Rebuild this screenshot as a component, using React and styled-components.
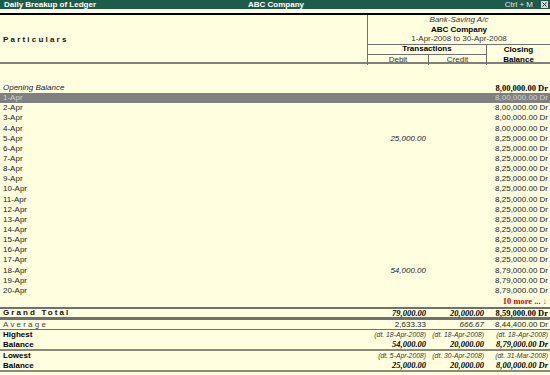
import styled, { createGlobalStyle } from "styled-components";

const GlobalStyle = createGlobalStyle`
  html, body {
    margin: 0;
    padding: 0;
    background: #ffffe0;
  }
  body {
    font-family: "Liberation Sans", Arial, sans-serif;
    font-size: 8px;
    color: #222;
  }
`;

const Window = styled.div`
  width: 550px;
  height: 375px;
  overflow: hidden;
  background: #ffffe0;
  display: flex;
  flex-direction: column;
`;

const TitleBar = styled.div`
  height: 9px;
  background: #1d5c4a;
  color: #fff;
  display: grid;
  grid-template-columns: 1fr auto 1fr;
  align-items: center;
  padding: 0 2px 0 4px;
  line-height: 9px;
  font-weight: bold;
`;

const TitleRight = styled.div`
  display: flex;
  justify-content: flex-end;
  align-items: center;
  gap: 8px;
  font-weight: normal;
  color: #e6e6e6;
`;

const CloseBox = styled.div`
  width: 7px;
  height: 7px;
  background: #d8d8d8;
  display: flex;
  align-items: center;
  justify-content: center;
`;

const TopRule = styled.div`
  margin-top: 4px;
  height: 2px;
  background: #000;
`;

const Header = styled.div`
  display: grid;
  grid-template-columns: 367px 1fr;
  height: 47px;
  border-bottom: 2px solid #808080;
`;

const Spaced = styled.div`
  letter-spacing: ${(p) => p.$ls || 2}px;
  color: ${(p) => p.$color || "#111"};
  font-weight: ${(p) => (p.$normal ? "normal" : "bold")};
`;

const HeadLeft = styled.div`
  display: flex;
  align-items: center;
  padding-left: 3px;
`;

const HeadRight = styled.div`
  border-left: 1px solid #707070;
  display: flex;
  flex-direction: column;
`;

const HeadLine = styled.div`
  height: 9.5px;
  line-height: 9.5px;
  text-align: center;
  font-style: ${(p) => (p.$italic ? "italic" : "normal")};
  font-weight: ${(p) => (p.$bold ? "bold" : "normal")};
  color: ${(p) => (p.$bold ? "#000" : "#333")};
`;

const ColGrid = styled.div`
  flex: 1;
  display: grid;
  grid-template-columns: 60px 58px 1fr;
  grid-template-rows: 10px 1fr;
  border-top: 1px solid #707070;
`;

const ColHead = styled.div`
  display: flex;
  flex-direction: column;
  align-items: center;
  justify-content: center;
  line-height: 10px;
  font-weight: ${(p) => (p.$bold ? "bold" : "normal")};
  color: ${(p) => (p.$bold ? "#000" : "#333")};
  grid-column: ${(p) => p.$col || "auto"};
  grid-row: ${(p) => p.$row || "auto"};
  border-left: ${(p) => (p.$left ? "1px solid #707070" : "none")};
  border-bottom: ${(p) => (p.$under ? "1px solid #707070" : "none")};
`;

const Body = styled.div`
  padding-top: 19px;
  height: 243px;
  box-sizing: border-box;
`;

const Row = styled.div`
  display: grid;
  grid-template-columns: 367px 61px 58px 64px;
  height: ${(p) => p.$h || 10.15}px;
  line-height: ${(p) => p.$h || 10.15}px;
  background: ${(p) => (p.$active ? "#808080" : "transparent")};
  color: ${(p) => (p.$active ? "#cfcfcf" : "#222")};
  border-top: ${(p) => p.$top || "none"};
  border-bottom: ${(p) => p.$bottom || "none"};
`;

const Label = styled.div`
  padding-left: 3px;
  white-space: nowrap;
  font-style: ${(p) => (p.$italic ? "italic" : "normal")};
  font-weight: ${(p) => (p.$bold ? "bold" : "normal")};
  color: ${(p) => (p.$bold ? "#000" : "inherit")};
`;

const Amt = styled.div`
  text-align: right;
  padding-right: 2px;
  white-space: nowrap;
  font-style: ${(p) => (p.$italic ? "italic" : "normal")};
  font-weight: ${(p) => (p.$bold ? "bold" : "normal")};
  font-family: ${(p) =>
    p.$bold ? '"Liberation Serif", "Times New Roman", serif' : "inherit"};
  font-size: ${(p) => (p.$small ? 6.8 : p.$bold ? 8.5 : 8)}px;
  color: ${(p) => (p.$bold ? "#000" : p.$small ? "#333" : "inherit")};
`;

const More = styled.div`
  grid-column: 4;
  text-align: right;
  padding-right: 3px;
  color: #e00000;
  font-weight: bold;
  font-family: "Liberation Serif", "Times New Roman", serif;
  font-size: 8.5px;
`;

const Group = styled.div`
  border-bottom: 2px solid #8a8a78;
  display: flex;
  flex-direction: column;
  justify-content: center;
`;

const days = Array.from({ length: 20 }, (_, i) => {
  const d = i + 1;
  let bal = "8,00,000.00 Dr";
  if (d >= 5) bal = "8,25,000.00 Dr";
  if (d >= 18) bal = "8,79,000.00 Dr";
  let debit = "";
  if (d === 5) debit = "25,000.00";
  if (d === 18) debit = "54,000.00";
  return { name: `${d}-Apr`, debit, bal };
});

const X = () => (
  <svg width="5" height="5" viewBox="0 0 5 5">
    <path d="M0.5 0.5L4.5 4.5M4.5 0.5L0.5 4.5" stroke="#333" strokeWidth="1" />
  </svg>
);

export default function App() {
  return (
    <Window>
      <GlobalStyle />
      <TitleBar>
        <div>Daily Breakup of Ledger</div>
        <div>ABC Company</div>
        <TitleRight>
          <span>Ctrl + M</span>
          <CloseBox>
            <X />
          </CloseBox>
        </TitleRight>
      </TitleBar>
      <TopRule />
      <Header>
        <HeadLeft>
          <Spaced $ls={2.2}>Particulars</Spaced>
        </HeadLeft>
        <HeadRight>
          <HeadLine $italic>Bank-Saving A/c</HeadLine>
          <HeadLine $bold>ABC Company</HeadLine>
          <HeadLine>1-Apr-2008 to 30-Apr-2008</HeadLine>
          <ColGrid>
            <ColHead $bold $col="1 / 3" $under>
              Transactions
            </ColHead>
            <ColHead $bold $col="3" $row="1 / 3" $left>
              <span>Closing</span>
              <span>Balance</span>
            </ColHead>
            <ColHead $col="1" $row="2">
              Debit
            </ColHead>
            <ColHead $col="2" $row="2" $left>
              Credit
            </ColHead>
          </ColGrid>
        </HeadRight>
      </Header>

      <Body>
        <Row>
          <Label $italic>Opening Balance</Label>
          <Amt />
          <Amt />
          <Amt $bold>8,00,000.00 Dr</Amt>
        </Row>
        {days.map((r, i) => (
          <Row key={r.name} $active={i === 0}>
            <Label>{r.name}</Label>
            <Amt $italic>{r.debit}</Amt>
            <Amt />
            <Amt>{r.bal}</Amt>
          </Row>
        ))}
        <Row $h={11}>
          <More>10 more ... ↓</More>
        </Row>
      </Body>

      <Row $h={8} $top="2px solid #707070" $bottom="3px solid #707070">
        <Label>
          <Spaced $ls={2.1}>Grand Total</Spaced>
        </Label>
        <Amt $bold $italic>79,000.00</Amt>
        <Amt $bold $italic>20,000.00</Amt>
        <Amt $bold>8,59,000.00 Dr</Amt>
      </Row>
      <Row $h={9} $bottom="1px solid #707070">
        <Label>
          <Spaced $ls={2.2} $normal $color="#444">
            Average
          </Spaced>
        </Label>
        <Amt>2,633.33</Amt>
        <Amt $italic>666.67</Amt>
        <Amt>8,44,400.00 Dr</Amt>
      </Row>
      <Group>
        <Row $h={9.5}>
          <Label $bold>Highest</Label>
          <Amt $italic $small>(dt. 18-Apr-2008)</Amt>
          <Amt $italic $small>(dt. 18-Apr-2008)</Amt>
          <Amt $italic $small>(dt. 18-Apr-2008)</Amt>
        </Row>
        <Row $h={9.5}>
          <Label $bold>Balance</Label>
          <Amt $bold $italic>54,000.00</Amt>
          <Amt $bold $italic>20,000.00</Amt>
          <Amt $bold $italic>8,79,000.00 Dr</Amt>
        </Row>
      </Group>
      <Group>
        <Row $h={9.5}>
          <Label $bold>Lowest</Label>
          <Amt $italic $small>(dt. 5-Apr-2008)</Amt>
          <Amt $italic $small>(dt. 30-Apr-2008)</Amt>
          <Amt $italic $small>(dt. 31-Mar-2008)</Amt>
        </Row>
        <Row $h={9.5}>
          <Label $bold>Balance</Label>
          <Amt $bold $italic>25,000.00</Amt>
          <Amt $bold $italic>20,000.00</Amt>
          <Amt $bold $italic>8,00,000.00 Dr</Amt>
        </Row>
      </Group>
    </Window>
  );
}
